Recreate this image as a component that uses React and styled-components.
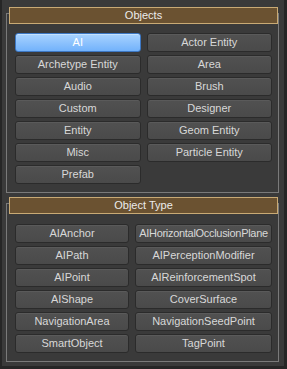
import React from 'react'
import styled, { createGlobalStyle } from 'styled-components'

const objects = [
  'AI',
  'Actor Entity',
  'Archetype Entity',
  'Area',
  'Audio',
  'Brush',
  'Custom',
  'Designer',
  'Entity',
  'Geom Entity',
  'Misc',
  'Particle Entity',
  'Prefab',
]

const objectTypes = [
  'AIAnchor',
  'AIHorizontalOcclusionPlane',
  'AIPath',
  'AIPerceptionModifier',
  'AIPoint',
  'AIReinforcementSpot',
  'AIShape',
  'CoverSurface',
  'NavigationArea',
  'NavigationSeedPoint',
  'SmartObject',
  'TagPoint',
]

const GlobalStyle = createGlobalStyle`
  html, body {
    margin: 0;
    padding: 0;
    background: #262626;
  }
  body {
    font-family: "Liberation Sans", Arial, sans-serif;
  }
`

export default function App() {
  const [selected, setSelected] = React.useState('AI')

  const renderButton = name => (
    <Button
      key={name}
      $active={selected === name}
      $tight={name.length > 22}
      onClick={() => setSelected(name)}
    >
      {name}
    </Button>
  )

  return (
    <Window>
      <GlobalStyle />
      <Group>
        <Header>Objects</Header>
        <Frame $top={19}>
          <Grid $cols="1fr 1fr">{objects.map(renderButton)}</Grid>
        </Frame>
      </Group>

      <Group>
        <Header>Object Type</Header>
        <Frame $top={20}>
          <Grid $cols="114px 1fr">{objectTypes.map(renderButton)}</Grid>
        </Frame>
      </Group>
    </Window>
  )
}

const Window = styled.div`
  box-sizing: border-box;
  width: 287px;
  height: 369px;
  background: #3a3a3a;
  border-left: 2px solid #262626;
  border-right: 3px solid #262626;
  border-bottom: 3px solid #262626;
  padding: 7px 3px 0 4px;
  display: flex;
  flex-direction: column;
  gap: 4px;
`

const Group = styled.div`
  display: flex;
  flex-direction: column;
  width: 273px;
`

const Header = styled.div`
  position: relative;
  z-index: 1;
  box-sizing: border-box;
  height: 17px;
  margin: 0 1px -11px 3px;
  background: #6b5231;
  border: 1px solid #c9aa75;
  color: #ececec;
  font-size: 11px;
  line-height: 15px;
  text-align: center;
`

const Frame = styled.div`
  border: 1px solid #7a7a7a;
  padding: ${p => p.$top}px 6px 8px 8px;
`

const Grid = styled.div`
  display: grid;
  grid-template-columns: ${p => p.$cols};
  column-gap: 6px;
  row-gap: 3px;
`

const Button = styled.button`
  box-sizing: border-box;
  height: 19px;
  padding: 0;
  border-radius: 3px;
  border: 1px solid ${p => (p.$active ? '#3d78c4' : '#2b2b2b')};
  background: ${p =>
    p.$active ? 'linear-gradient(#a9d3ff, #72b2fb)' : 'linear-gradient(#515151, #4a4a4a)'};
  box-shadow: inset 0 1px 0 ${p => (p.$active ? '#c4e2ff' : '#5a5a5a')};
  color: ${p => (p.$active ? '#ffffff' : '#d8d8d8')};
  font: 11px "Liberation Sans", Arial, sans-serif;
  letter-spacing: ${p => (p.$tight ? '-0.3px' : 'normal')};
  line-height: 17px;
  white-space: nowrap;
  overflow: hidden;
  cursor: pointer;
  outline: none;
`
